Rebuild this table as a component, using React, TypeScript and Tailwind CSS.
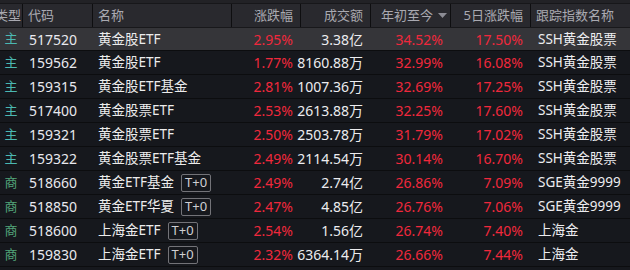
import React from 'react';

type RowType = {
    kind: '主' | '商'
    code: string
    name: string
    t0?: boolean
    change: string
    amount: string
    ytd: string
    d5: string
    index: string
}

const rows: RowType[] = [
    {kind: '主', code: '517520', name: '黄金股ETF', change: '2.95%', amount: '3.38亿', ytd: '34.52%', d5: '17.50%', index: 'SSH黄金股票'},
    {kind: '主', code: '159562', name: '黄金股ETF', change: '1.77%', amount: '8160.88万', ytd: '32.99%', d5: '16.08%', index: 'SSH黄金股票'},
    {kind: '主', code: '159315', name: '黄金股ETF基金', change: '2.81%', amount: '1007.36万', ytd: '32.69%', d5: '17.25%', index: 'SSH黄金股票'},
    {kind: '主', code: '517400', name: '黄金股票ETF', change: '2.53%', amount: '2613.88万', ytd: '32.25%', d5: '17.60%', index: 'SSH黄金股票'},
    {kind: '主', code: '159321', name: '黄金股票ETF', change: '2.50%', amount: '2503.78万', ytd: '31.79%', d5: '17.02%', index: 'SSH黄金股票'},
    {kind: '主', code: '159322', name: '黄金股票ETF基金', change: '2.49%', amount: '2114.54万', ytd: '30.14%', d5: '16.70%', index: 'SSH黄金股票'},
    {kind: '商', code: '518660', name: '黄金ETF基金', t0: true, change: '2.49%', amount: '2.74亿', ytd: '26.86%', d5: '7.09%', index: 'SGE黄金9999'},
    {kind: '商', code: '518850', name: '黄金ETF华夏', t0: true, change: '2.47%', amount: '4.85亿', ytd: '26.76%', d5: '7.06%', index: 'SGE黄金9999'},
    {kind: '商', code: '518600', name: '上海金ETF', t0: true, change: '2.54%', amount: '1.56亿', ytd: '26.74%', d5: '7.40%', index: '上海金'},
    {kind: '商', code: '159830', name: '上海金ETF', t0: true, change: '2.32%', amount: '6364.14万', ytd: '26.66%', d5: '7.44%', index: '上海金'},
]

const grid = 'grid grid-cols-[22px_70px_139px_69px_70px_80px_80px_100px]'

const SortArrow = () => (
    <svg width="9" height="5" viewBox="0 0 9 5" className="ml-[5px]">
        <path d="M0 0 H9 L4.5 5 Z" fill="#8c8c94"/>
    </svg>
)

const Header = () => {
    const cell = 'flex items-center border-l border-[#0e0e10] whitespace-nowrap overflow-hidden'
    return (
        <div className={`${grid} h-[24px] bg-[#29292e] border-t border-[#17171a] text-[13px] text-[#a9a9b1]`}>
            <div className="flex items-center justify-end overflow-hidden whitespace-nowrap pr-[1px]">类型</div>
            <div className={`${cell} pl-[5px]`}>代码</div>
            <div className={`${cell} pl-[5px]`}>名称</div>
            <div className={`${cell} justify-end pr-[7px]`}>涨跌幅</div>
            <div className={`${cell} justify-end pr-[7px]`}>成交额</div>
            <div className={`${cell} justify-end pr-[3px]`}>年初至今<SortArrow/></div>
            <div className={`${cell} justify-end pr-[7px]`}>5日涨跌幅</div>
            <div className={`${cell} pl-[5px]`}>跟踪指数名称</div>
        </div>
    )
}

const Row: React.FC<{row: RowType, active: boolean}> = ({row, active}) => {
    const red = 'text-[#f0283c]'
    return (
        <div className={`${grid} h-[24px] border-b border-[#0c0d0f] text-[14px] whitespace-nowrap
            ${active ? 'bg-[#353539] border-t border-t-[#18181b]' : ''}`}>
            <div className={`flex items-center justify-center text-[13px] ${row.kind === '主' ? 'text-[#4bb8b2]' : 'text-[#52a479]'}`}>
                {row.kind}
            </div>
            <div className="flex items-center pl-[7px] text-[#e9e9ee]">{row.code}</div>
            <div className="flex items-center pl-[6px] text-[#ececec] text-[13.5px]">
                {row.name}
                {row.t0 && (
                    <span className="ml-[7px] h-[18px] px-[3px] flex items-center border border-[#737378] rounded-[2px] text-[13px] text-[#cfcfd3]">
                        T+0
                    </span>
                )}
            </div>
            <div className={`flex items-center justify-end pr-[7px] ${red}`}>{row.change}</div>
            <div className="flex items-center justify-end pr-[7px] text-[#ececef]">{row.amount}</div>
            <div className={`flex items-center justify-end pr-[7px] ${red}`}>{row.ytd}</div>
            <div className={`flex items-center justify-end pr-[7px] ${red}`}>{row.d5}</div>
            <div className="flex items-center pl-[8px] text-[#ececef] text-[13.5px]">{row.index}</div>
        </div>
    )
}

export default function App() {
    return (
        <div className="w-[630px] h-[270px] overflow-hidden bg-[#16181d]"
             style={{fontFamily: '"Noto Sans", "Noto Sans CJK SC", sans-serif'}}>
            <div className="h-[3px] bg-[#222226]"/>
            <Header/>
            {rows.map((r, i) => <Row key={r.code} row={r} active={i === 0}/>)}
        </div>
    )
}
